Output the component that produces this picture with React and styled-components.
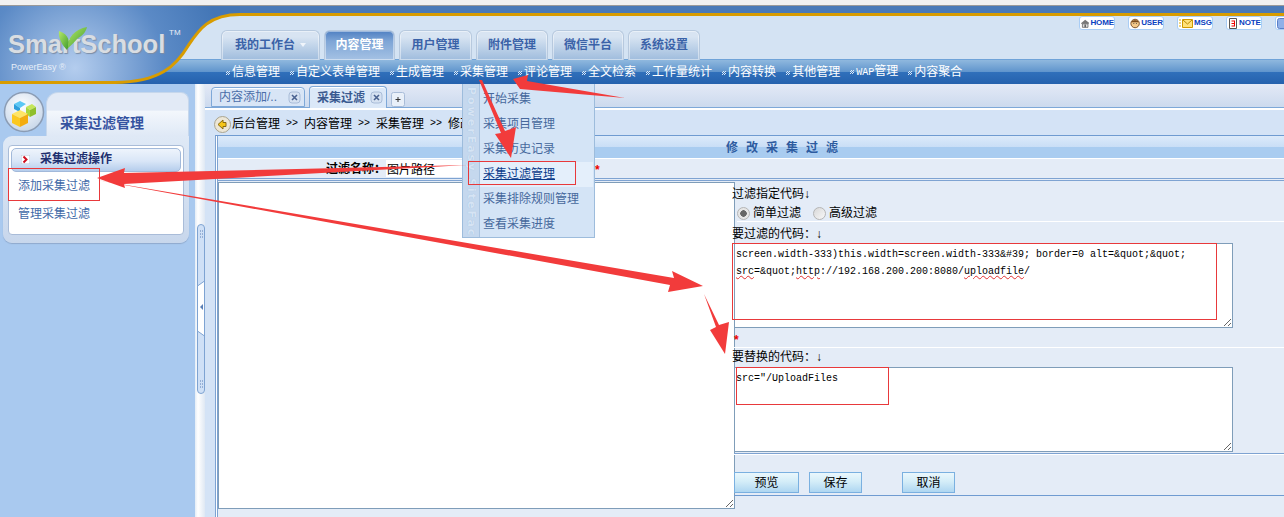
import React from 'react'
import styled, { createGlobalStyle } from 'styled-components'

const cjk = `"Liberation Sans", "Noto Sans CJK SC", sans-serif`
const mono = `"Liberation Mono", "Noto Sans CJK SC", monospace`

const Global = createGlobalStyle`
  html, body { margin: 0; padding: 0; background: #fff; }
  body { font: 12px/18px ${cjk}; color: #000; }
  * { box-sizing: border-box; }
`

const Page = styled.div`
  position: relative;
  width: 1284px;
  height: 517px;
  overflow: hidden;
`

const TopStrip = styled.div`
  height: 6px;
  background: #f1f1f1;
  border-bottom: 1px solid #9a9a9a;
`

const Header = styled.header`
  position: relative;
  height: 78px;
  background: #d4e3f3;
`

const Band = styled.div`
  height: 10px;
  background: #4a7ab8;
  border-bottom: 3px solid #d89c00;
`

const Utility = styled.div`
  display: flex;
  gap: 13px;
  height: 14px;
  padding-left: 1079px;
`

const Pill = styled.a`
  flex: none;
  display: flex;
  align-items: center;
  gap: 1px;
  width: 36px;
  height: 14px;
  padding-left: 1px;
  background: #fff;
  border: 1px solid #a9cdf5;
  border-radius: 3px;
  font: bold 8px/12px "Liberation Sans", sans-serif;
  color: #0b3fc0;
  letter-spacing: -0.1px;
`

const Logo = styled.div`
  position: absolute;
  left: 0;
  top: 0;
  width: 260px;
  height: 78px;
`

const LogoArt = styled.svg`
  position: absolute;
  inset: 0;
`

const LogoName = styled.div`
  position: absolute;
  left: 8px;
  top: 23px;
  font: bold 25.5px/30px "Liberation Sans", sans-serif;
  color: #d9dde2;
  text-shadow: 1px 1px 1px #7c8da6;
`

const LogoMark = styled.sup`
  position: absolute;
  left: 169px;
  top: 22px;
  font: 8px/10px "Liberation Sans", sans-serif;
  color: #e8eef6;
`

const LogoSub = styled.div`
  position: absolute;
  left: 11px;
  top: 55px;
  font: 9px/12px "Liberation Sans", sans-serif;
  color: #e6eef8;
`

const LogoLeaf = styled.svg`
  position: absolute;
  left: 58px;
  top: 20px;
`

const Tabs = styled.nav`
  display: flex;
  gap: 4px;
  height: 29px;
  padding-left: 221px;
`

const Tab = styled.a`
  display: flex;
  align-items: center;
  justify-content: center;
  gap: 5px;
  width: ${p => p.$width || 72}px;
  height: 30px;
  padding-bottom: 2px;
  border: 1px solid #b7c9de;
  border-bottom: 0;
  border-radius: 6px 6px 0 0;
  font-weight: bold;
  color: ${p => (p.$active ? '#fff' : '#3a62a8')};
  background: ${p => (p.$active
    ? 'linear-gradient(#4f80c2, #7ea5d6 35%, #a5c2e4)'
    : 'linear-gradient(#d8e4f2 20%, #c2d5ea 50%, #9fbcdd)')};
  box-shadow: inset 0 0 0 1px rgba(255, 255, 255, .45);
`

const TabCaret = styled.span`
  width: 0;
  height: 0;
  border: 3px solid transparent;
  border-top: 4px solid #f0f5fb;
  margin-top: 3px;
`

const SubNav = styled.nav`
  display: flex;
  gap: 16px;
  height: 25px;
  padding-left: 232px;
  align-items: center;
  color: #fff;
  border-top: 1px solid #6fa3d8;
  background: linear-gradient(#8fb8de, #5f94cc 50%, #3070bb 50%, #2561ad);
`

const SubItem = styled.a`
  position: relative;
  white-space: nowrap;
  &::before {
    content: '';
    position: absolute;
    left: -6px;
    top: 8px;
    width: 4px;
    height: 4px;
    background: conic-gradient(#dbe8f6 25%, transparent 0 50%, #dbe8f6 0 75%, transparent 0);
    background-size: 2px 2px;
  }
`

const Ascii = styled.span`
  font: 10px/18px ${mono};
`

const Body = styled.div`
  display: flex;
  height: 433px;
`

const Sidebar = styled.aside`
  position: relative;
  flex: none;
  width: 195px;
  padding: 8px 6px 0 3px;
  background: #a9c9ef;
`

const Badge = styled.svg`
  position: absolute;
  left: 3px;
  top: 7px;
`

const SideTitle = styled.div`
  height: 44px;
  margin-left: 43px;
  padding: 19px 0 0 13px;
  border: 1px solid #c6d7ec;
  border-bottom: 0;
  border-radius: 12px 8px 0 0;
  background: linear-gradient(#e2eaf6 40%, #f3f7fc 42%, #dfe9f6);
  font-size: 14px;
  line-height: 22px;
  font-weight: bold;
  color: #3553a0;
`

const SideCard = styled.div`
  height: 107px;
  padding: 9px 5px 8px;
  border-radius: 9px 0 9px 9px;
  background: linear-gradient(#dfe9f6, #c8d7ec);
  box-shadow: 0 1px 1px #8fa9cc;
`

const SideInner = styled.div`
  height: 90px;
  padding: 2px;
  background: #fff;
  border: 1px solid #a9bcd8;
  border-radius: 4px;
`

const GroupHead = styled.div`
  display: flex;
  align-items: center;
  gap: 10px;
  height: 24px;
  padding: 0 0 2px 9px;
  border: 1px solid #a2b9da;
  border-radius: 5px;
  background: linear-gradient(#eef4fc, #d9e6f7 55%, #b5cdec);
  font-weight: bold;
  color: #1f3070;
`

const SideLink = styled.a`
  display: block;
  height: 28px;
  padding: 5px 0 0 7px;
  color: #4169a8;
`

const Splitter = styled.div`
  flex: none;
  width: 10px;
  padding: 140px 0 0 2px;
  background: linear-gradient(90deg, #e3ecf6, #fff 30%, #dfe8f3);
`

const Main = styled.main`
  flex: 1;
  min-width: 0;
  display: flex;
  flex-direction: column;
  background: #d4e3f6;
`

const DocTabs = styled.div`
  display: flex;
  align-items: flex-end;
  gap: 4px;
  height: 24px;
  padding-left: 6px;
  border-bottom: 1px solid #7ea8d8;
  background: linear-gradient(#e3e9f6, #ccdaee);
`

const DocTab = styled.a`
  display: flex;
  align-items: center;
  justify-content: space-between;
  width: ${p => p.$width}px;
  height: ${p => (p.$active ? 22 : 20)}px;
  margin-bottom: ${p => (p.$active ? -1 : 0)}px;
  padding: 0 3px 0 7px;
  border: 1px solid #7ea8d8;
  border-bottom: ${p => (p.$active ? 0 : '1px solid #7ea8d8')};
  border-radius: 4px 4px 0 0;
  color: ${p => (p.$active ? '#3a5a90' : '#4a6da8')};
  font-weight: ${p => (p.$active ? 'bold' : 'normal')};
  background: ${p => (p.$active ? '#dbe8f8' : '#d8e5f6')};
  box-shadow: inset 0 1px 0 #fff;
`

const TabIcon = styled.svg`
  flex: none;
`

const Crumbs = styled.div`
  display: flex;
  align-items: center;
  gap: 6px;
  height: 27px;
  padding: 3px 0 0 9px;
  border-top: 2px solid #fff;
  background: #d4e3f6;
`

const CrumbSep = styled.span`
  font: 10px/18px ${mono};
`

const CrumbIcon = styled.svg`
  margin-right: -5px;
`

const Frame = styled.section`
  flex: 1;
  margin-left: 10px;
  border-top: 1px solid #6f9bd1;
  border-left: 1px solid #7ea3d2;
`

const FrameInner = styled.div`
  height: 100%;
  border-left: 1px solid #fff;
`

const Panel = styled.div`
  height: 100%;
  border-left: 1px solid #7ea3d2;
  background: #e4ecf7;
`

const PanelTitle = styled.h2`
  margin: 0;
  height: 23px;
  padding-left: 508px;
  font-size: 12px;
  line-height: 24px;
  font-weight: bold;
  letter-spacing: 8px;
  color: #2d5b9f;
  background: linear-gradient(#dceafa, #c9def6 50%, #a9ccf0 52%, #a9ccf0);
  border-bottom: 1px solid #fff;
`

const NameRow = styled.div`
  display: flex;
  align-items: center;
  height: 22px;
  padding-left: 108px;
  border-bottom: 3px double #7ea3d2;
`

const NameLabel = styled.label`
  font-weight: bold;
`

const NameInput = styled.input`
  width: 209px;
  height: 17px;
  padding: 0 1px;
  border: 0;
  background: #fff;
  font: 12px ${cjk};
`

const Star = styled.span`
  color: #e00;
  font-weight: bold;
  padding-top: 3px;
`

const FormGrid = styled.div`
  display: grid;
  grid-template-columns: 516px 1fr;
`

const BigArea = styled.textarea`
  display: block;
  width: 517px;
  height: 327px;
  margin-top: 1px;
  border: 1px solid #7f9db9;
  background: #fff;
`

const RightCol = styled.div`
  min-width: 0;
`

const Row = styled.div`
  display: flex;
  align-items: center;
  gap: ${p => p.$gap || 0}px;
  height: ${p => p.$h}px;
  padding: ${p => p.$pad || 0};
  margin-left: ${p => p.$in || 0}px;
  border-bottom: ${p => p.$line || 0};
`

const Note = styled.span`
  margin-left: -2px;
`

const RadioLabel = styled.label`
  display: flex;
  align-items: center;
  gap: 3px;
`

const Radio = styled.input`
  appearance: none;
  width: 13px;
  height: 13px;
  margin: 0;
  border-radius: 50%;
  border: 1px solid #b5b5b5;
  background: ${p => (p.$on
    ? 'radial-gradient(circle, #666 0 3px, #e6e6e6 3.5px)'
    : 'linear-gradient(135deg, #d8d8d8, #f8f8f8)')};
`

const Code = styled.div`
  width: 499px;
  height: 85px;
  padding: 2px 1px;
  border: 1px solid #7f9db9;
  background: #fff;
  font: 10px/17px ${mono};
  overflow: auto;
  resize: both;
  margin-bottom: 1px;
`

const Typo = styled.span`
  text-decoration: underline wavy #e23232 1px;
`

const Buttons = styled.div`
  display: flex;
  align-items: flex-end;
  height: 43px;
  padding-bottom: 2px;
  border-top: 1px solid #7ea3d2;
  border-bottom: 1px solid #6f9bd1;
  box-shadow: inset 0 1px 0 #fff;
`

const Btn = styled.button`
  width: ${p => p.$width}px;
  height: 21px;
  margin-left: ${p => p.$left || 0}px;
  padding: 0;
  border: 1px solid #7ab0e0;
  background: linear-gradient(#eaf7fc, #d4edf8 45%, #aed6f1);
  font: 12px/18px ${cjk};
  color: #000;
`

const Menu = styled.div`
  position: absolute;
  left: 462px;
  top: 84px;
  display: flex;
  width: 133px;
  height: 154px;
  border: 1px solid #9dbcdc;
  border-top: 0;
  background: #d4e4f6;
`

const MenuStrip = styled.div`
  flex: none;
  width: 17px;
  padding-top: 3px;
  background: #c5d8ee;
  border-right: 1px solid #a9c3e0;
  writing-mode: vertical-rl;
  font: bold 11px/16px "DejaVu Sans", sans-serif;
  letter-spacing: 2px;
  color: #d6e4f4;
  text-shadow: 0 0 1px #a3bedd;
  white-space: nowrap;
  overflow: hidden;
`

const MenuList = styled.div`
  flex: 1;
  padding-top: 3px;
`

const MenuItem = styled.a`
  display: block;
  height: 25px;
  margin-right: 1px;
  padding: 3px 0 0 3px;
  color: ${p => (p.$active ? '#0a3a8a' : '#46689c')};
  background: ${p => (p.$active ? '#e4effb' : 'transparent')};
  text-decoration: ${p => (p.$active ? 'underline' : 'none')};
`

const Callouts = styled.svg`
  position: absolute;
  inset: 0;
  pointer-events: none;
`

const Mark = styled.div`
  position: absolute;
  left: ${p => p.$x}px;
  top: ${p => p.$y}px;
  width: ${p => p.$w}px;
  height: ${p => p.$h}px;
  border: 1px solid #e8393b;
`

const subItems = ['信息管理', '自定义表单管理', '生成管理', '采集管理', '评论管理', '全文检索', '工作量统计', '内容转换', '其他管理']
const menuItems = ['开始采集', '采集项目管理', '采集历史记录', '采集过滤管理', '采集排除规则管理', '查看采集进度']

const arrows = [
  '625,98 527,81 528,75 513,79 520,89',
  '479,80 482,80 505,131 516,127 511,158 495,134 501,133',
  '97,178 125,168 124,173 467,165 124,184 125,188',
  '97,180 674,278 672,271 703,286 668,292 670,285',
  '704,294 719,325 729,322 725,354 710,330 716,327',
]

const HomeIcon = () => (
  <svg width="12" height="11" viewBox="0 0 12 11">
    <path d="M0 5 6 0l6 5v1H0z" fill="#777" />
    <path d="M2 6h8v5H2z" fill="#ddd" stroke="#555" />
    <path d="M5 7h2v4H5z" fill="#555" />
  </svg>
)

const UserIcon = () => (
  <svg width="12" height="11" viewBox="0 0 12 11">
    <circle cx="6" cy="5.5" r="5" fill="#f4c98a" stroke="#6b3f16" />
    <path d="M1.5 4C3 1 9 1 10.500 4z" fill="#7a4a1c" />
    <path d="M4 5.500h1M7 5.500h1" stroke="#333" />
  </svg>
)

const MsgIcon = () => (
  <svg width="14" height="11" viewBox="0 0 14 11">
    <path d="M0 2h2M0 5h2M0 8h2" stroke="#e0a800" />
    <path d="M3.500 1.500h10v8h-10z" fill="#ffe27a" stroke="#d09a00" />
    <path d="M4 2l4.500 4L13 2" fill="none" stroke="#b98800" />
  </svg>
)

const NoteIcon = () => (
  <svg width="10" height="12" viewBox="0 0 10 12">
    <path d="M1.500 1.500h7v10h-7z" fill="#fff" stroke="#555" />
    <path d="M3.500 3.500h3v1h-3zM3.500 6h3v1h-3zM3.500 8.500h3v1h-3zM6 3.500h1v6H6z" fill="#e00" />
  </svg>
)

const HelpIcon = () => (
  <svg width="11" height="11" viewBox="0 0 11 11">
    <rect x=".5" y=".5" width="10" height="10" rx="2" fill="#8fb0e8" stroke="#5a7fc8" />
  </svg>
)

const CloseIcon = () => (
  <TabIcon width="13" height="13" viewBox="0 0 13 13">
    <rect x="1" y="1" width="11" height="11" rx="3" fill="#d5e1f1" stroke="#a9bcd8" />
    <path d="M4 4l5 5M9 4l-5 5" stroke="#4a6290" strokeWidth="1.6" />
  </TabIcon>
)

const PlusIcon = () => (
  <TabIcon width="14" height="15" viewBox="0 0 14 15">
    <rect x=".5" y=".5" width="13" height="14" rx="2" fill="#e9f0f9" stroke="#a9bcd8" />
    <path d="M7 5v5M4.500 7.500h5" stroke="#333" />
  </TabIcon>
)

const CubeBadge = () => (
  <Badge width="42" height="42" viewBox="0 0 42 42">
    <defs>
      <radialGradient id="orb" cx="45%" cy="35%" r="70%">
        <stop offset="0" stopColor="#ffffff" />
        <stop offset="1" stopColor="#c4d4e8" />
      </radialGradient>
    </defs>
    <circle cx="21" cy="21" r="19.500" fill="url(#orb)" stroke="#8b9cb4" strokeWidth="1.500" />
    <path d="M11 13l6-3 6 3-6 4z" fill="#5cc8f5" />
    <path d="M11 13l6 4v4l-6-3z" fill="#2e9fdc" />
    <path d="M23 16l6-3 4 3-6 3z" fill="#c5e65a" />
    <path d="M27 19l6-3v7l-6 3z" fill="#8fbf2c" />
    <path d="M23 16l4 3v7l-4-3z" fill="#a8d63e" />
    <path d="M9 23l8-4 8 4-8 4z" fill="#ffe566" />
    <path d="M9 23l8 4v9l-8-4z" fill="#fbc820" />
    <path d="M25 23l-8 4v9l8-4z" fill="#f3ac10" />
  </Badge>
)

const SplitHandle = () => (
  <svg width="8" height="170" viewBox="0 0 8 170">
    <rect x=".5" y=".5" width="7" height="169" rx="3.500" fill="#cfe0f6" stroke="#7ea3d2" />
    <path d="M.5 62 7.500 57v55l-7-5z" fill="#fff" stroke="#7ea3d2" />
    <path d="M6 80v6l-3-3z" fill="#5a7fb5" />
    <path d="M3 7h1M5 7h1M3 10h1M5 10h1M3 13h1M5 13h1M3 157h1M5 157h1M3 160h1M5 160h1M3 163h1M5 163h1" stroke="#5a7fb5" />
  </svg>
)

const LogoBlock = () => (
  <Logo>
    <LogoArt width="260" height="78" viewBox="0 0 260 78">
      <defs>
        <radialGradient id="sky" gradientUnits="userSpaceOnUse" cx="75" cy="62" r="150">
          <stop offset="0" stopColor="#b4cdee" />
          <stop offset=".6" stopColor="#5b8ac6" />
          <stop offset="1" stopColor="#4376b6" />
        </radialGradient>
      </defs>
      <path d="M0 0H240V8C208 8 198 25 188 40 176 60 160 76 115 76H0z" fill="url(#sky)" />
      <path d="M260 8.500H240C208 8.500 198 25 188 40 176 60 160 76 115 76.500H0" fill="none" stroke="#d89c00" strokeWidth="3" />
    </LogoArt>
    <LogoName>SmartSchool</LogoName>
    <LogoLeaf width="30" height="24" viewBox="0 0 30 24">
      <defs>
        <linearGradient id="leaf" x1="0" y1="0" x2="1" y2="1">
          <stop offset="0" stopColor="#b5e86a" />
          <stop offset="1" stopColor="#3c9a2a" />
        </linearGradient>
      </defs>
      <path d="M1 5C0 12 4 19 9 24 13 17 11 8 1 5z" fill="url(#leaf)" />
      <path d="M10 22C9 12 17 3 29 1 28 6 24 10 20 12 17 15 14 19 10 22z" fill="url(#leaf)" />
    </LogoLeaf>
    <LogoMark>TM</LogoMark>
    <LogoSub>PowerEasy ®</LogoSub>
  </Logo>
)

export default function App() {
  return (
    <Page>
      <Global />
      <TopStrip />
      <Header>
        <Band />
        <Utility>
          <Pill><HomeIcon />HOME</Pill>
          <Pill><UserIcon />USER</Pill>
          <Pill><MsgIcon />MSG</Pill>
          <Pill><NoteIcon />NOTE</Pill>
          <Pill><HelpIcon /></Pill>
        </Utility>
        <Tabs>
          <Tab $width={99}>我的工作台<TabCaret /></Tab>
          <Tab $width={71} $active>内容管理</Tab>
          <Tab $width={73}>用户管理</Tab>
          <Tab>附件管理</Tab>
          <Tab>微信平台</Tab>
          <Tab>系统设置</Tab>
        </Tabs>
        <SubNav>
          {subItems.map(item => <SubItem key={item}>{item}</SubItem>)}
          <SubItem><Ascii>WAP</Ascii>管理</SubItem>
          <SubItem>内容聚合</SubItem>
        </SubNav>
        <LogoBlock />
      </Header>
      <Body>
        <Sidebar>
          <SideTitle>采集过滤管理</SideTitle>
          <CubeBadge />
          <SideCard>
            <SideInner>
              <GroupHead>
                <svg width="9" height="9" viewBox="0 0 9 9">
                  <rect width="9" height="9" fill="#fff" stroke="#b9c6d8" />
                  <path d="M2.500 1.500 5.500 4.500 2.500 7.500" fill="none" stroke="#d01020" strokeWidth="2" />
                </svg>
                采集过滤操作
              </GroupHead>
              <SideLink>添加采集过滤</SideLink>
              <SideLink>管理采集过滤</SideLink>
            </SideInner>
          </SideCard>
        </Sidebar>
        <Splitter><SplitHandle /></Splitter>
        <Main>
          <DocTabs>
            <DocTab $width={94}>内容添加/..<CloseIcon /></DocTab>
            <DocTab $width={78} $active>采集过滤<CloseIcon /></DocTab>
            <PlusIcon />
          </DocTabs>
          <Crumbs>
            <CrumbIcon width="17" height="17" viewBox="0 0 17 17">
              <circle cx="8.500" cy="8.500" r="8" fill="#ece6d6" stroke="#a9a490" />
              <path d="M4 8.500 9 4v2.500h3v4H9V13z" fill="#f5c518" stroke="#8a6a10" />
            </CrumbIcon>
            <span>后台管理</span><CrumbSep>&gt;&gt;</CrumbSep>
            <span>内容管理</span><CrumbSep>&gt;&gt;</CrumbSep>
            <span>采集管理</span><CrumbSep>&gt;&gt;</CrumbSep>
            <span>修改采集过滤</span>
          </Crumbs>
          <Frame>
            <FrameInner>
              <Panel>
                <PanelTitle>修改采集过滤</PanelTitle>
                <NameRow>
                  <NameLabel>过滤名称：</NameLabel>
                  <NameInput defaultValue="图片路径" />
                  <Star>*</Star>
                </NameRow>
                <FormGrid>
                  <BigArea readOnly />
                  <RightCol>
                    <Row $h={22} $pad="3px 0 0"><Note>过滤指定代码↓</Note></Row>
                    <Row $h={19} $gap={12} $in={3} $pad="2px 0 0" $line="1px solid #fff">
                      <RadioLabel><Radio type="radio" name="kind" $on defaultChecked />简单过滤</RadioLabel>
                      <RadioLabel><Radio type="radio" name="kind" />高级过滤</RadioLabel>
                    </Row>
                    <Row $h={21} $pad="2px 0 0"><Note>要过滤的代码：↓</Note></Row>
                    <Code>
                      screen.width-333)this.width=screen.width-333&amp;#39; border=0 alt=&amp;quot;&amp;quot;
                      {' '}<Typo>src</Typo>=&amp;quot;<Typo>http</Typo>://192.168.200.200:8080/<Typo>uploadfile</Typo>/
                    </Code>
                    <Row $h={19} $line="1px solid #fff"><Star>*</Star></Row>
                    <Row $h={19} $pad="0 0 2px"><Note>要替换的代码：↓</Note></Row>
                    <Code>src=&quot;/UploadFiles</Code>
                    <Buttons>
                      <Btn $width={65}>预览</Btn>
                      <Btn $width={53} $left={10}>保存</Btn>
                      <Btn $width={53} $left={40}>取消</Btn>
                    </Buttons>
                  </RightCol>
                </FormGrid>
              </Panel>
            </FrameInner>
          </Frame>
        </Main>
      </Body>
      <Menu>
        <MenuStrip>PowerEasy SiteFactory</MenuStrip>
        <MenuList>
          {menuItems.map(item => (
            <MenuItem key={item} $active={item === '采集过滤管理'}>{item}</MenuItem>
          ))}
        </MenuList>
      </Menu>
      <Callouts width="1284" height="517" viewBox="0 0 1284 517">
        {arrows.map(points => <polygon key={points} points={points} fill="#f23b3b" />)}
      </Callouts>
      <Mark $x={8} $y={168} $w={92} $h={33} />
      <Mark $x={468} $y={161} $w={108} $h={24} />
      <Mark $x={732} $y={243} $w={485} $h={77} />
      <Mark $x={736} $y={367} $w={153} $h={38} />
    </Page>
  )
}
